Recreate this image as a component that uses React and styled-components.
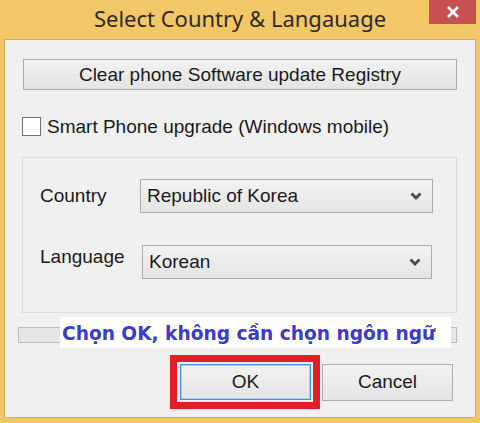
import React from 'react';
import styled, { createGlobalStyle } from 'styled-components';

const Global = createGlobalStyle`
  html, body { margin: 0; padding: 0; background: #f2c767; }
  * { box-sizing: border-box; }
`;

const Window = styled.div`
  position: relative;
  width: 480px;
  height: 423px;
  background: #f2c767;
  display: flex;
  flex-direction: column;
  font-family: "Liberation Sans", Arial, sans-serif;
  color: #1a1a1a;
`;

const TitleBar = styled.div`
  height: 39px;
  display: flex;
  align-items: center;
  justify-content: center;
  padding-bottom: 4px;
  font-family: "Noto Sans", "Open Sans", sans-serif;
  font-size: 22px;
  color: #2e2a20;
`;

const CloseButton = styled.div`
  position: absolute;
  top: 0;
  right: 4px;
  width: 47px;
  height: 24px;
  background: #c75050;
  display: flex;
  align-items: center;
  justify-content: center;
`;

const Client = styled.div`
  margin: 0 4px 5px 4px;
  flex: 1;
  background: #f0f0f0;
  border: 1px solid #d2ad5c;
  display: flex;
  flex-direction: column;
  padding: 19px 18px 8px 13px;
`;

const Button = styled.div`
  height: ${p => p.$h || 31}px;
  width: ${p => (p.$w ? p.$w + 'px' : 'auto')};
  margin-left: ${p => p.$ml || 0}px;
  background: linear-gradient(#f2f2f2, #e4e4e4);
  border: 1px solid ${p => (p.$focus ? '#3d8ee0' : '#adadad')};
  box-shadow: ${p => (p.$focus ? 'inset 0 0 0 1px #a6d0f6' : 'none')};
  display: flex;
  align-items: center;
  justify-content: center;
  font-size: 19px;
`;

const CheckRow = styled.label`
  display: flex;
  align-items: center;
  gap: 6px;
  margin: 27px 0 0 4px;
  height: 19px;
  font-size: 19px;
`;

const Box = styled.span`
  width: 19px;
  height: 19px;
  background: #fff;
  border: 1px solid #707070;
`;

const Group = styled.div`
  margin: 21px 0 0 4px;
  height: 156px;
  border: 1px solid #dcdcdc;
  display: grid;
  grid-template-columns: 100px 293px;
  grid-auto-rows: 34px;
  row-gap: 32px;
  padding: 21px 0 0 17px;
  align-items: center;
`;

const Label = styled.div`
  font-size: 19px;
  padding-bottom: ${p => p.$pb || 0}px;
`;

const Combo = styled.div`
  height: 34px;
  margin-left: ${p => p.$ml || 0}px;
  width: ${p => p.$w || 293}px;
  background: linear-gradient(#f2f2f2, #e5e5e5);
  border: 1px solid #acacac;
  display: flex;
  align-items: center;
  justify-content: space-between;
  padding: 0 10px 0 6px;
  font-size: 19px;
`;

const Status = styled.div`
  position: relative;
  margin-top: 14px;
  height: 16px;
  border: 1px solid #bcbcbc;
  background: #e6e6e6;
`;

const Note = styled.div`
  position: absolute;
  left: 41px;
  top: -11px;
  width: 391px;
  height: 31px;
  background: #fff;
  display: flex;
  align-items: center;
  padding: 1px 0 0 2px;
  font-family: "DejaVu Sans", Verdana, sans-serif;
  font-weight: bold;
  font-size: 18.6px;
  color: #3b3bcc;
  white-space: nowrap;
`;

const ButtonRow = styled.div`
  margin-top: 12px;
  display: flex;
  align-items: center;
  gap: 2px;
  padding-left: 152px;
`;

const Highlight = styled.div`
  border: 7px solid #e81c24;
  padding: 2px 2px 2px 3px;
`;

const Chevron = () => (
  <svg width="12" height="8" viewBox="0 0 12 8">
    <path d="M1.5 1.5 L6 6 L10.5 1.5" fill="none" stroke="#4a4a4a" strokeWidth="2.8" />
  </svg>
);

export default function App() {
  return (
    <Window>
      <Global />
      <TitleBar>Select Country &amp; Langauage</TitleBar>
      <CloseButton>
        <svg width="14" height="14" viewBox="0 0 14 14">
          <path d="M2 2 L12 12 M12 2 L2 12" stroke="#fff" strokeWidth="2.6" />
        </svg>
      </CloseButton>
      <Client>
        <Button $ml={5}>Clear phone Software update Registry</Button>
        <CheckRow>
          <Box />
          Smart Phone upgrade (Windows mobile)
        </CheckRow>
        <Group>
          <Label>Country</Label>
          <Combo>
            Republic of Korea
            <Chevron />
          </Combo>
          <Label $pb={10}>Language</Label>
          <Combo $ml={2} $w={290}>
            Korean
            <Chevron />
          </Combo>
        </Group>
        <Status>
          <Note>Chọn OK, không cần chọn ngôn ngữ</Note>
        </Status>
        <ButtonRow>
          <Highlight>
            <Button $w={131} $h={36} $focus>OK</Button>
          </Highlight>
          <Button $w={131} $h={37}>Cancel</Button>
        </ButtonRow>
      </Client>
    </Window>
  );
}
